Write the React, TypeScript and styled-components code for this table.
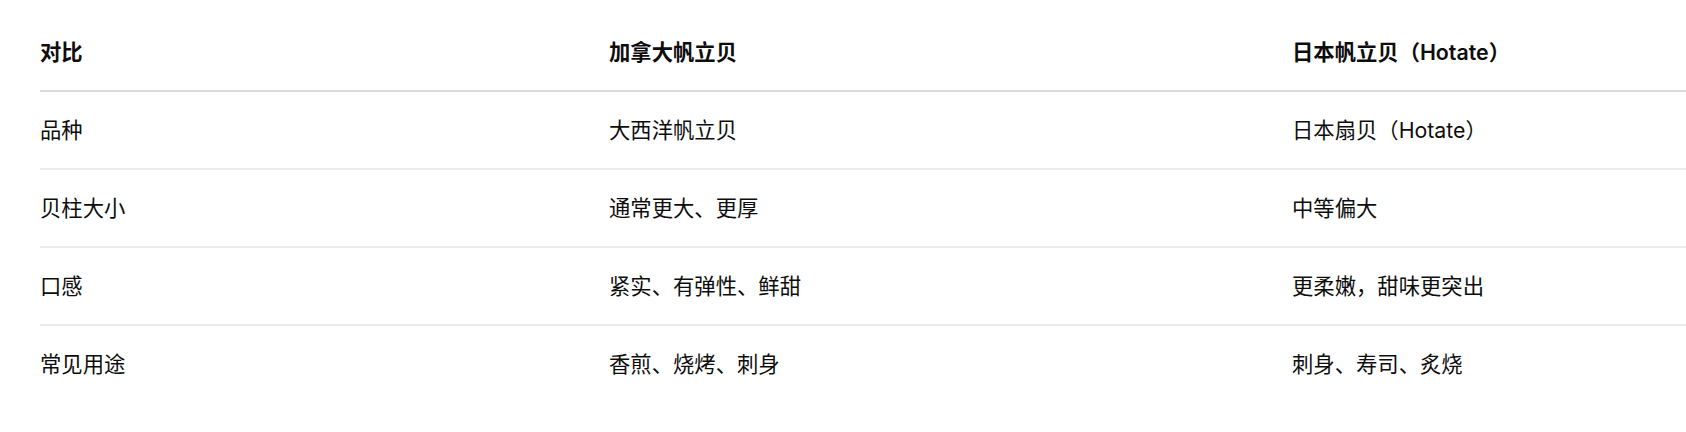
import React from "react";
import styled, { createGlobalStyle } from "styled-components";

const GlobalStyle = createGlobalStyle`
  html, body {
    margin: 0;
    padding: 0;
    background: #ffffff;
    overflow: hidden;
  }

  body {
    font-family: Inter, "Noto Sans CJK SC", "Noto Sans", sans-serif;
    color: #0d0d0d;
  }
`;

const rows = [
  { label: "品种", canada: "大西洋帆立贝", japan: "日本扇贝（Hotate）" },
  { label: "贝柱大小", canada: "通常更大、更厚", japan: "中等偏大" },
  { label: "口感", canada: "紧实、有弹性、鲜甜", japan: "更柔嫩，甜味更突出" },
  { label: "常见用途", canada: "香煎、烧烤、刺身", japan: "刺身、寿司、炙烧" },
];

const App = () => {
  return (
    <>
      <GlobalStyle />
      <PageWrapper>
        <CompareTable>
          <colgroup>
            <col style={{ width: 569 }} />
            <col style={{ width: 683 }} />
            <col />
          </colgroup>
          <thead>
            <tr>
              <HeadCell>对比</HeadCell>
              <HeadCell>加拿大帆立贝</HeadCell>
              <HeadCell>日本帆立贝（Hotate）</HeadCell>
            </tr>
          </thead>
          <tbody>
            {rows.map((row) => (
              <BodyRow key={row.label}>
                <BodyCell>{row.label}</BodyCell>
                <BodyCell>{row.canada}</BodyCell>
                <BodyCell>{row.japan}</BodyCell>
              </BodyRow>
            ))}
          </tbody>
        </CompareTable>
      </PageWrapper>
    </>
  );
};

const PageWrapper = styled.div`
  padding: 14px 0 0 40px;
`;

const CompareTable = styled.table`
  width: 1700px;
  table-layout: fixed;
  border-collapse: collapse;
  border-spacing: 0;
  font-size: 21.33px;
  line-height: 30px;
`;

const HeadCell = styled.th`
  height: 76px;
  padding: 0 16px 0 0;
  text-align: left;
  vertical-align: middle;
  font-weight: 600;
  border-bottom: 2px solid #dcdcdc;
`;

const BodyRow = styled.tr`
  &:last-child td {
    border-bottom: none;
  }
`;

const BodyCell = styled.td`
  height: 76px;
  padding: 0 16px 0 0;
  vertical-align: middle;
  font-weight: 400;
  border-bottom: 2px solid #ececec;
`;

export default App;
